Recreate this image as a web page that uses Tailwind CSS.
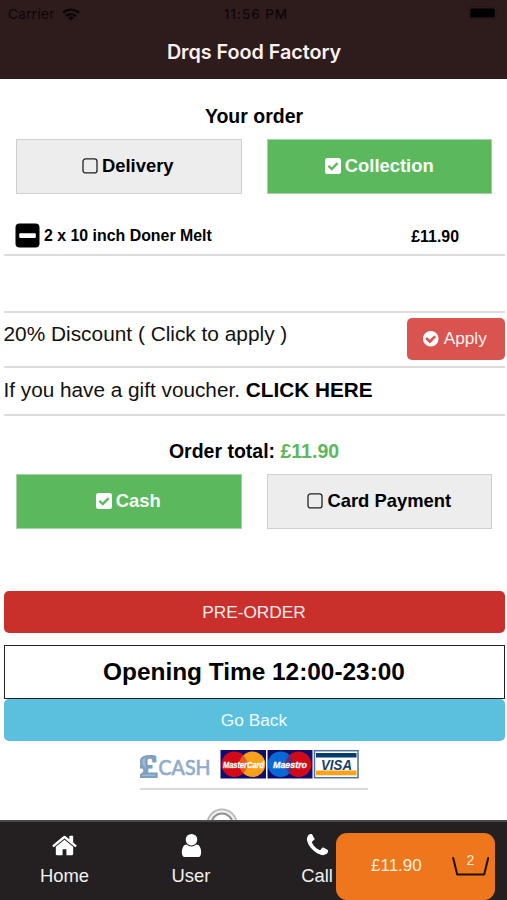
<!DOCTYPE html>
<html lang="en">
<head>
<meta charset="utf-8">
<title>Drqs Food Factory</title>
<script src="https://cdn.jsdelivr.net/npm/@tailwindcss/browser@4"></script>
</head>
<body class="bg-white">
<div class="relative flex h-[900px] w-[507px] flex-col overflow-hidden bg-white font-['Liberation_Sans',Arial,sans-serif] text-black">

  <header class="h-[79px] shrink-0 bg-[#2e1b1c] font-['Inter',sans-serif]">
    <div class="grid h-[28px] grid-cols-3 items-center pl-2 pr-[6px] text-[#0d0606]">
      <div class="flex items-center gap-[7px] text-[13.5px] tracking-[0.35px]">Carrier
        <svg class="h-[13px] w-[18px]" viewBox="0 0 18 13" fill="none" stroke="currentColor" stroke-width="2.3"><path d="M1 4.9a11.6 11.6 0 0 1 16 0M4 8.1a7.2 7.2 0 0 1 10 0"/><path d="M9 12.5 6.2 9.8a4 4 0 0 1 5.6 0z" fill="currentColor" stroke="none"/></svg>
      </div>
      <div class="pl-[3px] text-center text-[13.5px] font-medium tracking-[0.95px] whitespace-nowrap">11:56 PM</div>
      <svg class="mb-[2px] h-[14px] w-[33px] justify-self-end" viewBox="0 0 33 14"><rect x=".5" y=".5" width="28" height="13" rx="3.5" fill="none" stroke="#291718"/><rect x="2.3" y="2.5" width="24.5" height="9" rx="1.5" fill="#000"/><path d="M30 5v4q2-1 2-2t-2-2" fill="#291718"/></svg>
    </div>
    <h1 class="flex h-[49px] items-center justify-center pl-px text-[19.8px] font-semibold tracking-[-0.05px] text-[#fbf1f1]">Drqs Food Factory</h1>
  </header>

  <main class="flex flex-col pr-[2.5px] pl-[3.5px]">
    <h2 class="mt-[25px] h-[24px] text-center text-[19.5px] leading-[25px] font-bold">Your order</h2>
    <div class="mt-[11px] grid grid-cols-2 gap-[25px] px-[12.5px] text-[18.4px] font-bold">
      <div class="flex h-[55px] items-center justify-center gap-1 border border-[#cfcfcf] bg-[#ededed] pr-[2px] pb-[2px]">
        <svg class="size-4" viewBox="0 0 16 16" fill="none"><rect x="1" y=".9" width="14" height="14" rx="2.5" stroke="#222" stroke-width="1.3"/></svg>Delivery
      </div>
      <div class="flex h-[55px] items-center justify-center gap-1 border border-[#a9cfa9] bg-[#5cb85c] pb-[2px] text-[#f8fff8]">
        <svg class="size-[16px]" viewBox="0 0 16 16"><rect width="16" height="16" rx="2.5" fill="#fff"/><path d="m3.4 7.8 3.3 3.3 5.9-6" fill="none" stroke="#5cb85c" stroke-width="2.3"/></svg>Collection
      </div>
    </div>

    <div class="mt-[25px] flex h-[37px] items-start justify-between border-b-2 border-[#dcdcdc] pr-[45.5px] pl-[11.5px] text-[15.9px] font-bold">
      <div class="flex items-center gap-1 pt-[2px]">
        <svg class="size-[25px]" viewBox="0 0 25 25"><rect x=".5" y=".5" width="24" height="24" rx="4" fill="#000"/><rect x="4.2" y="10.2" width="16.6" height="4.8" rx="1" fill="#fff"/></svg>
        <span class="pt-[2px] leading-[26px]">2 x 10 inch Doner Melt</span>
      </div>
      <span class="pt-[5px] leading-[26px]">£11.90</span>
    </div>

    <div class="mt-[55px] flex h-[57px] items-start justify-between border-t-2 border-b-2 border-[#dcdcdc] text-[20.85px] text-[#111]">
      <span class="pt-[8px] leading-[26px]">20% Discount ( Click to apply )</span>
      <div class="mt-[5px] flex h-[42px] w-[98px] items-center justify-center gap-[5px] rounded-[5px] bg-[#d9534f] pr-[1px] text-[17.3px] text-[#fff1f0]">
        <svg class="size-[15.5px]" viewBox="128 128 1536 1536" fill="#fff"><path d="M1412 734q0-28-18-46l-91-90q-19-19-45-19t-45 19l-408 407-226-226q-19-19-45-19t-45 19l-91 90q-18 18-18 46 0 27 18 45l362 362q19 19 45 19 27 0 46-19l543-543q18-18 18-45zm252 162q0 209-103 385.5t-279.5 279.5-385.5 103-385.5-103-279.5-279.5-103-385.5 103-385.5 279.5-279.5 385.5-103 385.5 103 279.5 279.5 103 385.5z"/></svg>Apply
      </div>
    </div>
    <div class="h-[48px] border-b-2 border-[#dcdcdc] pt-[9px] text-[20.75px] leading-[26px] text-[#111]">If you have a gift voucher. <b class="text-black">CLICK HERE</b></div>

    <h2 class="mt-[23px] h-[24px] text-center text-[19.5px] leading-[24px] font-bold">Order total: <span class="text-[#5cb85c]">£11.90</span></h2>
    <div class="mt-[11px] grid grid-cols-2 gap-[25px] px-[12.5px] text-[18.4px] font-bold">
      <div class="flex h-[55px] items-center justify-center gap-1 border border-[#a9cfa9] bg-[#5cb85c] pr-[1px] pb-[2px] text-[#f8fff8]">
        <svg class="size-[16px]" viewBox="0 0 16 16"><rect width="16" height="16" rx="2.5" fill="#fff"/><path d="m3.4 7.8 3.3 3.3 5.9-6" fill="none" stroke="#5cb85c" stroke-width="2.3"/></svg>Cash
      </div>
      <div class="flex h-[55px] items-center justify-center gap-1 border border-[#cfcfcf] bg-[#ededed] pb-[2px]">
        <svg class="size-4" viewBox="0 0 16 16" fill="none"><rect x="1" y=".9" width="14" height="14" rx="2.5" stroke="#222" stroke-width="1.3"/></svg>Card Payment
      </div>
    </div>

    <div class="mt-[62px] flex h-[42px] items-center justify-center rounded-[5px] bg-[#c9302c] pt-px text-[17.3px] text-[#ffeceb]">PRE-ORDER</div>
    <div class="mt-3 flex h-[54px] items-center justify-center border-[1.5px] border-[#222] pt-px text-[24.4px] font-bold">Opening Time 12:00-23:00</div>
    <div class="flex h-[42px] items-center justify-center rounded-[5px] bg-[#5bc0de] pt-px text-[17.3px] text-[#f2fcff]">Go Back</div>

    <div class="mt-[8px] ml-[136.5px] h-[41px] w-[228px] border-b-2 border-[#dadada]">
      <svg class="h-[39px] w-[228px]" viewBox="140 749 228 39">
        <text x="139" y="776.500" font-family="Liberation Serif" font-size="32" font-weight="bold" fill="#9dbbd6" stroke="#7f9fbf" stroke-width="2" textLength="18.500" lengthAdjust="spacingAndGlyphs">£</text>
        <text x="158.500" y="774.500" font-family="Lato, sans-serif" font-size="20.500" fill="#8fadcb" stroke="#8fadcb" stroke-width=".7" textLength="52" lengthAdjust="spacingAndGlyphs">CASH</text>
        <rect x="220.500" y="750" width="45.500" height="28.500" fill="#100c70"/>
        <circle cx="234.300" cy="764.300" r="12.800" fill="#d20a18"/><circle cx="252.500" cy="764.300" r="12.800" fill="#f9a01b"/>
        <path d="M243.400 755.300a12.800 12.800 0 0 1 0 18 12.800 12.800 0 0 1 0-18" fill="#e45b1c"/>
        <text x="223" y="768" font-family="Liberation Sans" font-size="9.500" font-weight="bold" font-style="italic" fill="#fff" stroke="#fff" stroke-width=".3" textLength="41" lengthAdjust="spacingAndGlyphs">MasterCard</text>
        <rect x="267.500" y="750" width="45" height="28.500" fill="#100c70"/>
        <circle cx="280.500" cy="764.300" r="12.800" fill="#0869d6"/><circle cx="298.500" cy="764.300" r="12.800" fill="#d20a18"/>
        <path d="M289.500 755.300a12.800 12.800 0 0 1 0 18 12.800 12.800 0 0 1 0-18" fill="#5f2c72"/>
        <text x="273" y="767.500" font-family="Liberation Sans" font-size="9.500" font-weight="bold" font-style="italic" fill="#fff" stroke="#fff" stroke-width=".3" textLength="34" lengthAdjust="spacingAndGlyphs">Maestro</text>
        <rect x="314.500" y="750.700" width="43.500" height="27" fill="#fff" stroke="#4f7194" stroke-width="1.500"/>
        <rect x="316" y="753" width="40.500" height="4.500" fill="#063b70"/><rect x="316" y="770.500" width="40.500" height="4.800" fill="#f9a31a"/>
        <text x="321" y="769.500" font-family="Liberation Sans" font-size="14.500" font-weight="bold" font-style="italic" fill="#163e6c" textLength="31" lengthAdjust="spacingAndGlyphs">VISA</text>
      </svg>
    </div>
    <svg class="mt-[18px] ml-[202px] size-[32px]" viewBox="0 0 32 32" fill="none"><circle cx="16" cy="16" r="14.500" stroke="#b9b9b9" stroke-width="2"/><circle cx="16" cy="16" r="12.500" stroke="#eee" stroke-width="2"/><circle cx="16" cy="16" r="10.500" stroke="#929292" stroke-width="2"/></svg>
  </main>

  <nav class="absolute inset-x-0 bottom-0 flex h-[80px] border-t-2 border-[#4a4748] bg-[#242021] pt-[10px] pl-px text-[18.4px] text-[#f2f2f2]">
    <div class="flex w-[127px] flex-col items-center">
      <svg class="size-[27px]" viewBox="0 0 1792 1792" fill="#fff"><path d="M1472 992v480q0 26-19 45t-45 19h-384v-384h-256v384h-384q-26 0-45-19t-19-45v-480q0-1 .5-3t.5-3l575-474 575 474q1 2 1 6zm223-69l-62 74q-8 9-21 11h-3q-13 0-21-7l-692-577-692 577q-12 8-24 7-13-2-21-11l-62-74q-8-10-7-23.5t11-21.5l719-599q32-26 76-26t76 26l244 204v-195q0-14 9-23t23-9h192q14 0 23 9t9 23v408l219 182q10 8 11 21.5t-7 23.5z"/></svg>
      <span class="mt-[4px] leading-[26px]">Home</span>
    </div>
    <div class="flex w-[126px] flex-col items-center">
      <svg class="size-[27px]" viewBox="0 0 1792 1792" fill="#fff"><path d="M1536 1399q0 109-62.500 187t-150.500 78h-854q-88 0-150.500-78t-62.500-187q0-85 8.500-160.500t31.500-152 58.500-131 94-89 134.500-34.500q131 128 313 128t313-128q76 0 134.500 34.500t94 89 58.500 131 31.500 152 8.500 160.500zm-256-887q0 159-112.500 271.500t-271.500 112.500-271.500-112.500-112.500-271.500 112.500-271.500 271.500-112.500 271.500 112.500 112.500 271.500z"/></svg>
      <span class="mt-[4px] leading-[26px]">User</span>
    </div>
    <div class="flex w-[126px] flex-col items-center">
      <svg class="size-[27px]" viewBox="0 0 1792 1792" fill="#fff"><path d="M1600 1240q0 27-10 70.500t-21 68.500q-21 50-122 106-94 51-186 51-27 0-52.500-3.500t-57.500-12.500-47.500-14.500-55.500-20.500-49-18q-98-35-175-83-128-79-264.500-215.500t-215.500-264.500q-48-77-83-175-3-9-18-49t-20.500-55.500-14.500-47.500-12.500-57.500-3.500-52.500q0-92 51-186 56-101 106-122 25-11 68.500-21t70.500-10q14 0 21 3 18 6 53 76 11 19 30 54t35 63.500 31 53.500q3 4 17.500 25t21.500 35.500 7 28.500q0 20-28.500 50t-62 55-62 53-28.500 46q0 9 5 22.500t8.500 20.500 14 24 11.500 19q76 137 174 235t235 174q2 1 19 11.500t24 14 20.500 8.500 22.500 5q18 0 46-28.500t53-62 55-62 50-28.500q14 0 28.500 7t35.500 21.500 25 17.500q25 15 53.500 31t63.500 35 54 30q70 35 76 53 3 7 3 21z"/></svg>
      <span class="mt-[4px] leading-[26px]">Call</span>
    </div>
  </nav>

  <div class="absolute top-[833px] left-[336px] flex h-[67px] w-[159px] items-center justify-between rounded-[11px] bg-[#ee761c] pr-[6px] pb-[2px] pl-[35px] text-[17px] text-[#fff0dc]">
    <span>£11.90</span>
    <div class="relative h-[20px] w-[37px]">
      <svg class="size-full" viewBox="0 0 37 20" fill="none" stroke="#1d1109" stroke-width="2" stroke-linecap="round" stroke-linejoin="round"><path d="m1.200 2 4 16.500h27l4-16.500"/></svg>
      <span class="absolute top-[-4px] left-0 w-full text-center text-[14px] leading-[16px]">2</span>
    </div>
  </div>
</div>
</body>
</html>
